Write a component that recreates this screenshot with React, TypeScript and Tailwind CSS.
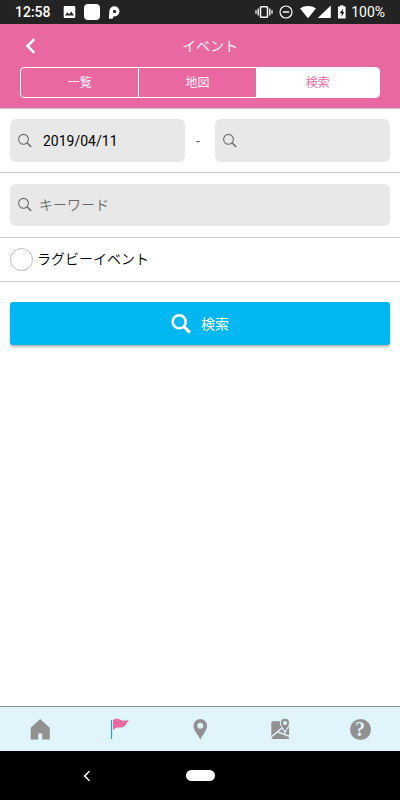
import React, { useState } from "react";

const FONT = "font-['Roboto','Noto_Sans_CJK_JP',sans-serif]";

function SearchIcon() {
  return (
    <svg className="size-4 shrink-0" viewBox="0 0 16 16" fill="none" stroke="#6b6b6b" aria-hidden="true">
      <circle cx="6.5" cy="6.3" r="4.9" strokeWidth="1.1" />
      <path d="M10 9.8 L14.2 14" strokeWidth="1.6" />
    </svg>
  );
}

function StatusBar() {
  return (
    <div className="flex h-6 items-center justify-between bg-[#232323] px-[15px] text-sm text-white">
      <div className="flex items-center">
        <span className="font-medium">12:58</span>
        <svg className="ml-3 h-4 w-[14px]" viewBox="0 0 14 16" aria-hidden="true">
          <path
            fill="#fff"
            fillRule="evenodd"
            d="M2 2h9a1.3 1.3 0 0 1 1.3 1.3v9.4A1.3 1.3 0 0 1 11 14H2a1.3 1.3 0 0 1-1.3-1.3V3.3A1.3 1.3 0 0 1 2 2zM2 11.500h9L8.300 7.400 6 10.200 4.300 8.200z"
          />
        </svg>
        <span className="ml-[7px] size-4 rounded bg-white" />
        <svg className="ml-2 h-4 w-3" viewBox="0 0 12 16" aria-hidden="true">
          <path
            fill="#fff"
            fillRule="evenodd"
            d="M1.300 7.300A5.100 5.100 0 0 1 6.400 2.200 5.100 5.100 0 1 1 6.400 12.400H5.200V13.200A1.500 1.500 0 0 1 3.700 14.800H.9zM5.200 5.900V8.900H6.700a1.500 1.500 0 0 0 0-3z"
          />
        </svg>
      </div>
      <div className="flex items-center">
        <svg className="h-4 w-[18px]" viewBox="0 0 18 16" fill="none" stroke="#fff" aria-hidden="true">
          <rect x="5.500" y="2.800" width="7" height="10.400" rx="0.800" strokeWidth="1.500" />
          <path d="M3.200 4.500v7M14.800 4.500v7M1 6.200v3.600M17 6.200v3.600" strokeWidth="1.300" />
        </svg>
        <svg className="ml-[5px] size-4" viewBox="0 0 16 16" fill="none" stroke="#fff" aria-hidden="true">
          <circle cx="8" cy="8" r="6" strokeWidth="1.200" />
          <path d="M4.800 8h6.400" strokeWidth="1.500" />
        </svg>
        <svg className="ml-[6px] h-4 w-4" viewBox="0 0 16 16" aria-hidden="true">
          <path d="M0 4.500C4.500 1.200 11.500 1.200 16 4.500L8 14.200z" fill="#fff" />
        </svg>
        <svg className="ml-px h-4 w-[14px]" viewBox="0 0 14 16" aria-hidden="true">
          <path d="M13.800 1.500V14H0.800z" fill="#fff" />
        </svg>
        <svg className="ml-[6px] h-4 w-[10px]" viewBox="0 0 10 16" aria-hidden="true">
          <path
            fill="#fff"
            fillRule="evenodd"
            d="M3.200 1.200h3.200v1.400h2.200v12H1v-12h2.200zM5.800 4.700L2.700 9.300h1.900v3.400L7.400 8H5.800z"
          />
        </svg>
        <span className="ml-1">100%</span>
      </div>
    </div>
  );
}

const TABS = ["一覧", "地図", "検索"];

function Header({ tab, onTab }: { tab: number; onTab: (i: number) => void }) {
  return (
    <header className="border-b border-[#c8c8c8] bg-[#ea68a2] px-5 pb-[10px] text-white">
      <div className="grid h-[43px] grid-cols-[20px_1fr] items-center">
        <button type="button" aria-label="戻る" className="flex justify-center">
          <svg className="h-4 w-3" viewBox="0 0 12 16" fill="none" stroke="#fff" strokeWidth="2.600" aria-hidden="true">
            <path d="M10.300 1.200L3.500 8l6.800 6.800" />
          </svg>
        </button>
        <h1 className="text-center text-sm font-[350]">イベント</h1>
      </div>
      <div className="grid h-[31px] grid-cols-[119fr_118fr_123fr] overflow-hidden rounded border border-white text-xs font-[350]">
        {TABS.map((name, i) => (
          <button
            key={name}
            type="button"
            aria-pressed={tab === i}
            onClick={() => onTab(i)}
            className={`${i < 2 ? "border-r border-white" : ""} ${tab === i ? "bg-white text-[#ea68a2]" : "text-white"}`}
          >
            {name}
          </button>
        ))}
      </div>
    </header>
  );
}

function Field({
  label,
  value,
  placeholder,
  inset,
}: {
  label: string;
  value?: string;
  placeholder?: string;
  inset?: boolean;
}) {
  return (
    <label
      className={`flex min-w-0 flex-1 items-center rounded-md bg-[#e8e8e8] pr-2 pl-[7px] ${inset ? "h-[43px]" : "h-[42px]"}`}
    >
      <SearchIcon />
      <input
        type="text"
        aria-label={label}
        defaultValue={value}
        placeholder={placeholder}
        className={`min-w-0 flex-1 bg-transparent text-sm text-black outline-none placeholder:font-[350] placeholder:text-[#6b6b6b] ${inset ? "pl-[10px]" : "pl-[6px]"}`}
      />
    </label>
  );
}

function BottomNav() {
  return (
    <nav className="grid h-[45px] grid-cols-5 border-t border-[#8c8c8c] bg-[#dff4fb]">
      <button type="button" aria-label="ホーム" className="flex items-center justify-center">
        <svg className="size-6" viewBox="0 0 24 24" fill="#919191" aria-hidden="true">
          <path d="M12.200 2L21.800 10.800V22.500H14.200V16.500H10.200V22.500H2.700V10.800z" />
        </svg>
      </button>
      <button type="button" aria-label="イベント" className="flex items-center justify-center">
        <svg className="size-6" viewBox="0 0 24 24" aria-hidden="true">
          <path d="M3.500 3V22" stroke="#19abd3" strokeWidth="1.200" />
          <path
            d="M5 3.200C8 .9 10.500 1.900 13 3.200 15.500 4.300 17.500 3.500 21 3.100 18.500 5.500 18.300 8.500 15.300 10.100 12 11.300 8.500 8.800 5 13.300z"
            fill="#ea68a2"
          />
        </svg>
      </button>
      <button type="button" aria-label="スポット" className="flex items-center justify-center">
        <svg className="size-6" viewBox="0 0 24 24" aria-hidden="true">
          <path
            fill="#919191"
            fillRule="evenodd"
            d="M12.300 2a6.800 6.800 0 0 0-6.800 6.800C5.500 13.500 10.300 18 12.300 22.500 14.300 18 19.100 13.500 19.100 8.800A6.800 6.800 0 0 0 12.300 2zm0 3.800a3 3 0 1 1 0 6 3 3 0 0 1 0-6z"
          />
        </svg>
      </button>
      <button type="button" aria-label="地図" className="flex items-center justify-center">
        <svg className="size-6" viewBox="0 0 24 24" aria-hidden="true">
          <rect x="3.300" y="4.200" width="17.800" height="17.800" rx="1.500" fill="#919191" />
          <path d="M2 21L14 11" stroke="#dff4fb" strokeWidth="1.600" />
          <path d="M10 15L22 19.500" stroke="#dff4fb" strokeWidth="1.500" />
          <path
            d="M17 1.800a4.100 4.100 0 0 0-4.100 4.100c0 2.900 2.700 5.100 4.100 8.300 1.400-3.200 4.100-5.400 4.100-8.300A4.100 4.100 0 0 0 17 1.800z"
            fill="#919191"
            stroke="#dff4fb"
            strokeWidth="2.400"
            paintOrder="stroke"
          />
          <circle cx="17" cy="6" r="2" fill="#dff4fb" />
        </svg>
      </button>
      <button type="button" aria-label="ヘルプ" className="flex items-center justify-center">
        <span className="flex size-[21px] items-center justify-center rounded-full bg-[#919191] font-['Liberation_Serif',serif] text-xl leading-none font-bold text-[#dff4fb]">
          ?
        </span>
      </button>
    </nav>
  );
}

export default function App() {
  const [tab, setTab] = useState(2);
  return (
    <div className={`flex min-h-screen flex-col bg-white ${FONT}`}>
      <StatusBar />
      <Header tab={tab} onTab={setTab} />
      <main className="flex-1">
        <form onSubmit={(e) => e.preventDefault()}>
          <div className="flex items-center border-b border-[#c8c8c8] p-[10px]">
            <Field label="開始日" value="2019/04/11" inset />
            <span className="w-[30px] pr-1 text-center text-sm text-[#555555]">-</span>
            <Field label="終了日" inset />
          </div>
          <div className="flex border-b border-[#c8c8c8] px-[10px] py-[11px]">
            <Field label="キーワード" placeholder="キーワード" />
          </div>
          <label className="flex h-11 items-center gap-1 border-b border-[#c8c8c8] px-[10px] pb-px text-sm font-[350] text-black">
            <input
              type="checkbox"
              className="size-[23px] appearance-none rounded-full border border-[#b9b9bd] bg-white checked:bg-[#00b7f1]"
            />
            ラグビーイベント
          </label>
          <div className="px-[10px] py-5">
            <button
              type="submit"
              className="flex h-[43px] w-full items-center justify-center gap-[10px] rounded-[3px] bg-[#00b7f1] text-sm text-white shadow-[0_2px_3px_rgba(0,0,0,0.3)]"
            >
              <svg className="size-5" viewBox="0 0 20 20" fill="none" stroke="#fff" strokeWidth="2.600" aria-hidden="true">
                <circle cx="8.200" cy="7.800" r="6.500" />
                <path d="M12.700 12.300L18.900 18.600" strokeWidth="3.200" />
              </svg>
              検索
            </button>
          </div>
        </form>
      </main>
      <BottomNav />
      <div className="grid h-[49px] grid-cols-[173fr_54fr_173fr] items-center bg-black">
        <button type="button" aria-label="戻る" className="flex justify-center">
          <svg className="h-3 w-2" viewBox="0 0 8 12" fill="none" stroke="#fff" strokeWidth="1.600" aria-hidden="true">
            <path d="M6.500 1.200L1.700 6l4.800 4.800" />
          </svg>
        </button>
        <button type="button" aria-label="ホーム画面" className="flex justify-center">
          <span className="h-[11px] w-[29px] rounded-full bg-white" />
        </button>
      </div>
    </div>
  );
}
